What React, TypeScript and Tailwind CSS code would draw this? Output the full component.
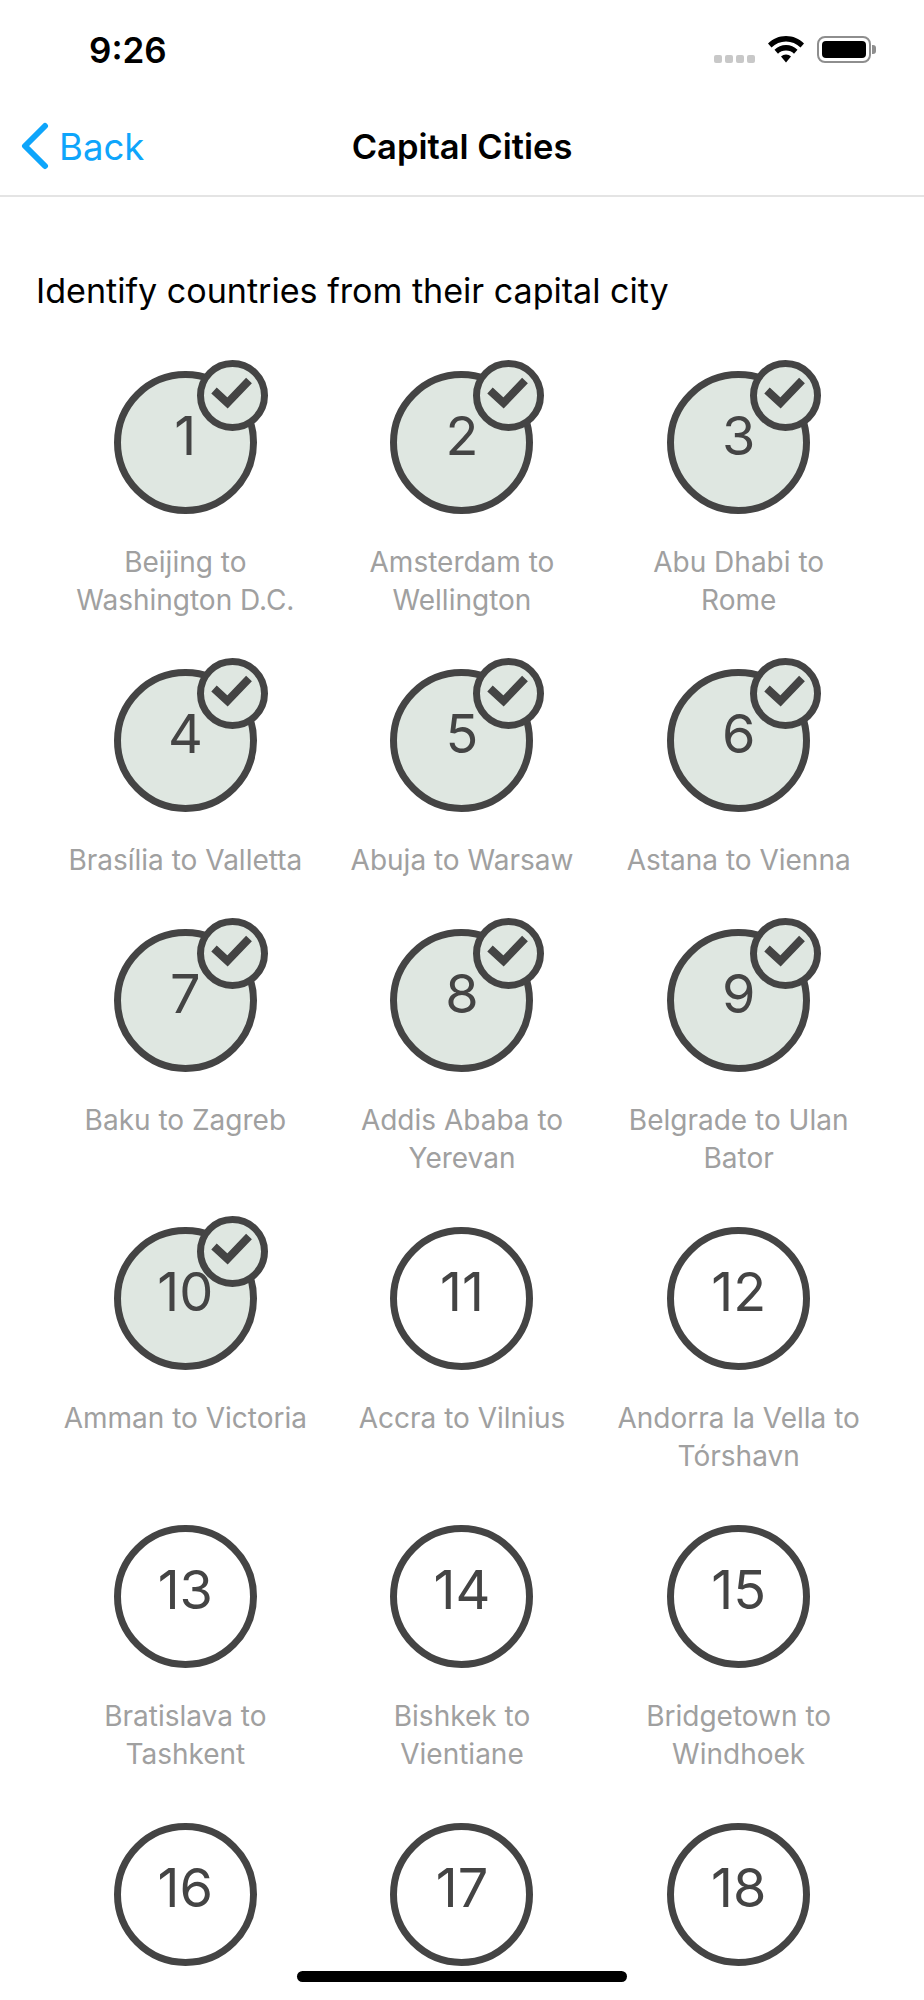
const levels = [
  { n: 1, label: 'Beijing to Washington D.C.', done: true },
  { n: 2, label: 'Amsterdam to Wellington', done: true },
  { n: 3, label: 'Abu Dhabi to Rome', done: true },
  { n: 4, label: 'Brasília to Valletta', done: true },
  { n: 5, label: 'Abuja to Warsaw', done: true },
  { n: 6, label: 'Astana to Vienna', done: true },
  { n: 7, label: 'Baku to Zagreb', done: true },
  { n: 8, label: 'Addis Ababa to Yerevan', done: true },
  { n: 9, label: 'Belgrade to Ulan Bator', done: true },
  { n: 10, label: 'Amman to Victoria', done: true },
  { n: 11, label: 'Accra to Vilnius', done: false },
  { n: 12, label: 'Andorra la Vella to Tórshavn', done: false },
  { n: 13, label: 'Bratislava to Tashkent', done: false },
  { n: 14, label: 'Bishkek to Vientiane', done: false },
  { n: 15, label: 'Bridgetown to Windhoek', done: false },
  { n: 16, label: '', done: false },
  { n: 17, label: '', done: false },
  { n: 18, label: '', done: false },
]

function StatusIcons() {
  return (
    <div className="flex items-end">
      <div className="flex gap-[3px] mr-[13px]">
        {[0, 1, 2, 3].map((i) => (
          <span key={i} className="w-[8px] h-[8px] rounded-[2px] bg-[#c8c8c8]" />
        ))}
      </div>
      <svg width="36" height="27" viewBox="0 0 36 27" className="mr-[13px]">
        <path d="M18 0C11 0 5 2.700 0 7.500L3.500 11.500C7.500 7.700 12.500 5.500 18 5.500C23.500 5.500 28.500 7.700 32.500 11.500L36 7.500C31 2.700 25 0 18 0Z" fill="#000" />
        <path d="M18 9C13.500 9 9.700 10.800 6.500 13.800L10 17.700C12 15.700 14.800 14.500 18 14.500C21.200 14.500 24 15.700 26 17.700L29.500 13.800C26.300 10.800 22.500 9 18 9Z" fill="#000" />
        <path d="M18 18.500C16 18.500 14.300 19.200 13 20.500L18 26.500L23 20.500C21.700 19.200 20 18.500 18 18.500Z" fill="#000" />
      </svg>
      <div className="w-[54px] h-[27px] rounded-[8px] border-2 border-[#8e8e8e] p-[3px]">
        <div className="w-full h-full rounded-[4px] bg-black" />
      </div>
      <div className="w-[4px] h-[9px] ml-[1px] mb-[9px] rounded-r-[3px] bg-[#8e8e8e]" />
    </div>
  )
}

function Level({ n, label, done }: { n: number; label: string; done: boolean }) {
  return (
    <div className="flex flex-col items-center">
      <div className="relative">
        <div className={`w-[143px] h-[143px] rounded-full border-[7px] border-[#444444] flex items-center justify-center text-[54px] text-[#444444] leading-none pb-[13px] ${done ? 'bg-[#dfe7e1]' : 'bg-white'}`}>
          {n}
        </div>
        {done && (
          <div className="absolute top-[-11px] left-[83px] w-[71px] h-[71px] rounded-full border-[7px] border-[#444444] bg-[#dfe7e1] flex items-center justify-center">
            <svg width="59" height="59" viewBox="0 0 59 59" className="shrink-0">
              <path d="M11 24.500L24.500 37L46 14.500" fill="none" stroke="#444444" strokeWidth="8" />
            </svg>
          </div>
        )}
      </div>
      <p className="mt-[29px] w-[250px] text-center text-[28px] leading-[38px] text-[#a0a0a0]">{label}</p>
    </div>
  )
}

export default function App() {
  return (
    <div className="relative h-[2000px] overflow-hidden bg-white font-['Inter',sans-serif]">
      {/* Status bar */}
      <div className="h-[100px] flex justify-between items-start pl-[89px] pr-[48px]">
        <span className="mt-[28px] text-[35px] leading-[44px] font-semibold text-black">9:26</span>
        <div className="mt-[36px]">
          <StatusIcons />
        </div>
      </div>

      {/* Nav bar */}
      <div className="relative h-[97px] flex items-center justify-center border-b-2 border-[#e4e4e4]">
        <div className="absolute left-[20px] top-[22px] flex items-center">
          <svg width="30" height="48" viewBox="0 0 30 48">
            <path d="M25 4L5 24L25 44" fill="none" stroke="#0ea5fb" strokeWidth="6" strokeLinecap="round" strokeLinejoin="round" />
          </svg>
          <span className="ml-[9px] mt-[2px] text-[36.5px] leading-[44px] text-[#0ea5fb]">Back</span>
        </div>
        <h1 className="text-[34.5px] font-semibold text-black leading-[44px] mb-[2px]">Capital Cities</h1>
      </div>

      {/* Content */}
      <p className="mt-[72px] ml-[36px] text-[34.1px] leading-[44px] text-black">Identify countries from their capital city</p>
      <div className="mt-[58px] mx-[47px] grid grid-cols-3 gap-y-[50px]">
        {levels.map((l) => (
          <Level key={l.n} {...l} />
        ))}
      </div>

      {/* Home indicator */}
      <div className="absolute bottom-[18px] left-[297px] w-[330px] h-[11px] rounded-full bg-black" />
    </div>
  )
}
